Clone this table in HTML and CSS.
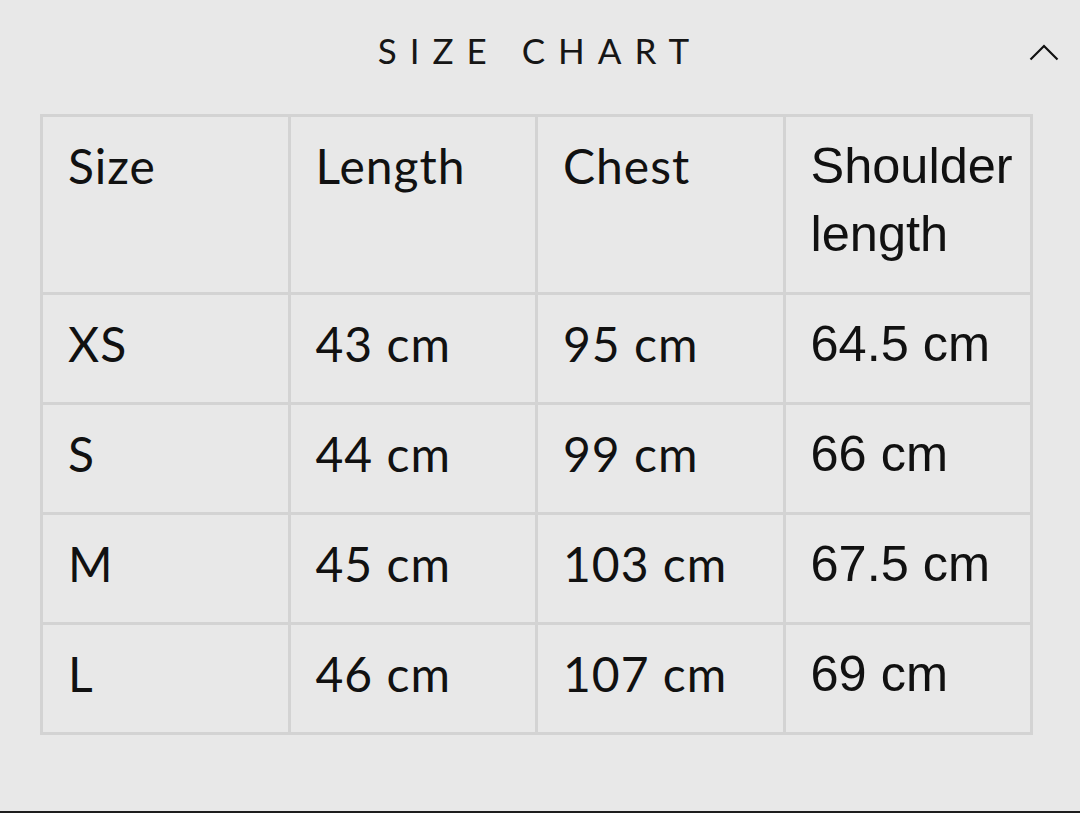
FILE: index.html
```html
<!DOCTYPE html>
<html lang="en">
<head>
<meta charset="utf-8">
<title>Size Chart</title>
<link rel="stylesheet" href="styles.css">
</head>
<body>
<div class="page">
  <header class="head">
    <span class="spacer"></span>
    <h2 class="title">SIZE CHART</h2>
    <span class="toggle" aria-label="Collapse">
      <svg width="30" height="20" viewBox="0 0 30 20"><path d="M1.5 17.5 L15 4 L28.5 17.5" fill="none" stroke="#111" stroke-width="2.2"/></svg>
    </span>
  </header>
  <table class="chart">
    <thead>
      <tr><th>Size</th><th>Length</th><th>Chest</th><th class="alt">Shoulder length</th></tr>
    </thead>
    <tbody>
      <tr><td>XS</td><td>43 cm</td><td>95 cm</td><td class="alt">64.5 cm</td></tr>
      <tr><td>S</td><td>44 cm</td><td>99 cm</td><td class="alt">66 cm</td></tr>
      <tr><td>M</td><td>45 cm</td><td>103 cm</td><td class="alt">67.5 cm</td></tr>
      <tr><td>L</td><td>46 cm</td><td>107 cm</td><td class="alt">69 cm</td></tr>
    </tbody>
  </table>
</div>
</body>
</html>
```

FILE: styles.css
```css
html, body {
  margin: 0;
  padding: 0;
  background: #e8e8e8;
}
.page {
  height: 813px;
  box-sizing: border-box;
  border-bottom: 2px solid #1e1e1e;
  color: #111;
  font-family: Lato, "Open Sans", sans-serif;
}
.head {
  height: 100px;
  display: grid;
  grid-template-columns: 1fr auto 1fr;
  align-items: center;
}
.title {
  margin: 0;
  font-weight: 400;
  font-size: 35px;
  letter-spacing: 13px;
  line-height: 1.2;
  color: #161616;
}
.toggle {
  justify-self: end;
  margin-right: 21px;
  display: flex;
  margin-top: 4px;
}
.chart {
  margin: 14px 0 0 40px;
  width: 993px;
  table-layout: fixed;
  border-collapse: separate;
  border-spacing: 0;
  border-top: 3px solid #d3d3d3;
  border-left: 3px solid #d3d3d3;
}
.chart th, .chart td {
  border-right: 3px solid #d3d3d3;
  border-bottom: 3px solid #d3d3d3;
  text-align: left;
  vertical-align: top;
  font-weight: 400;
  font-size: 48px;
  letter-spacing: 1px;
  line-height: 68px;
  padding: 15px 2px 24px 25px;
}
.chart .alt {
  font-family: "Liberation Sans", Arial, sans-serif;
  font-size: 50.5px;
  letter-spacing: 0;
}
```
